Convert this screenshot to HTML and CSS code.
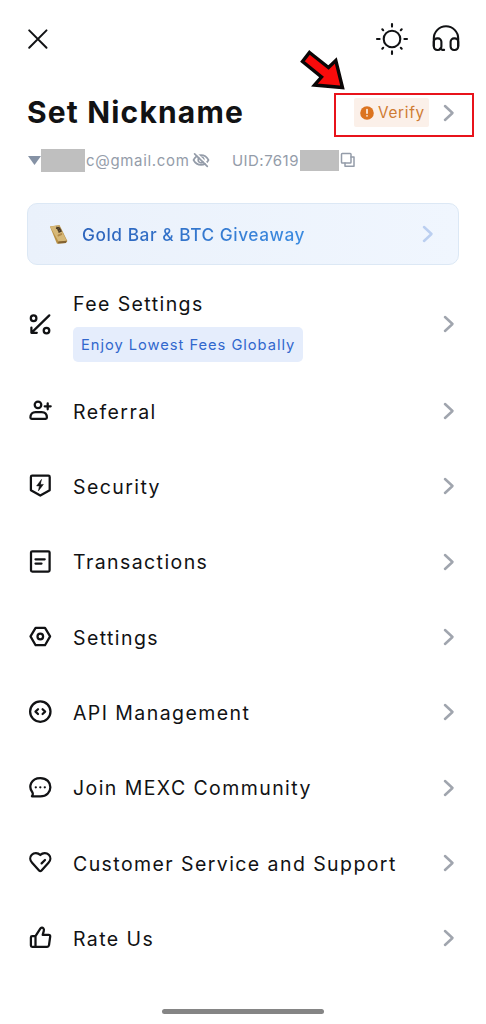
FILE: index.html
```html
<!DOCTYPE html>
<html lang="en">
<head>
<meta charset="utf-8">
<title>Account</title>
<link rel="stylesheet" href="styles.css">
</head>
<body>
<main class="screen">
  <header class="topbar">
    <svg class="close" viewBox="0 0 24 24"><path d="M3.2 3.4 20.5 20.7M20.5 3.4 3.2 20.7"/></svg>
    <div class="tools">
      <svg class="tool" viewBox="0 0 34 34"><circle cx="17" cy="17" r="8.3"/><path d="M17 2v2.6M17 29.4v2.6M2 17h2.6M29.4 17h2.6M7.3 7.3l.9.9M25.8 25.8l.9.9M7.3 26.7l.9-.9M25.8 8.2l.9-.9"/></svg>
      <svg class="tool" viewBox="0 0 34 34"><path d="M4.8 24V16.5a12.2 12.2 0 0 1 24.4 0V24"/><rect x="4.8" y="16.4" width="7.6" height="11.6" rx="3.4"/><rect x="21.6" y="16.4" width="7.6" height="11.6" rx="3.4"/><path d="M11 26.5l2.3 1.4h1.8"/></svg>
    </div>
  </header>

  <section class="profile">
    <h1 class="name">Set Nickname</h1>
    <div class="verify">
      <span class="tag"><svg class="alert" viewBox="0 0 14 14"><circle cx="7" cy="7" r="6.8"/><path d="M7 3.6v3.6M7 9.8v.3"/></svg><span class="tag-text">Verify</span></span>
      <svg class="chev" viewBox="0 0 12 18"><path d="m2 2 7.5 7L2 16"/></svg>
      <svg class="pointer" viewBox="0 0 50 44"><path d="M10.5 3.5 29.5 18.5 36.8 11.5 43.5 38.5 15.5 36 22.5 28 3.5 12.5Z"/></svg>
    </div>
  </section>

  <section class="info">
    <svg class="caret" viewBox="0 0 13 9"><path d="M0 0h13L6.5 9Z"/></svg><span class="mask mask-mail"></span><span class="mail">c@gmail.com</span>
    <svg class="eye" viewBox="0 0 18 16"><path d="M1.5 8C5 1.5 13 1.5 16.5 8 13 14.5 5 14.5 1.5 8Z"/><circle cx="9" cy="8" r="2.8"/><path class="gap" d="M3.8.9 16.3 13"/><path d="M2.6 1.8 15.3 14.3"/></svg>
    <span class="uid">UID:7619</span><span class="mask mask-uid"></span>
    <svg class="copy" viewBox="0 0 16 16"><rect x="1.5" y="1.5" width="9.5" height="9.5" rx=".8"/><path d="M11 5h3v9.3H5V11"/></svg>
  </section>

  <a class="banner">
    <svg class="gold" viewBox="0 0 22 22"><path fill="#b99145" d="M2 2.5 12 1l8.3 16.7-1.6 2.2-9.3.8Z"/><path fill="#d6b878" d="m2 2.5 9.5-1 8.2 16-8.7.8Z"/><path fill="#846332" d="m11 18.3 8.7-.8-1 2.4-8.3.6Z"/><path fill="none" stroke="#4b3b26" stroke-width="1.5" d="m9.4 3.4 2.5 5M9 4.5l2.5-.8 1 1.5-2 1 2.4-.4.8 1.8-2.2.7"/><path stroke="#b28a4a" d="m11 12 3-1.5"/></svg>
    <span class="banner-text">Gold Bar &amp; BTC Giveaway</span>
    <svg class="chev" viewBox="0 0 12 18"><path d="m2 2 7.5 7L2 16"/></svg>
  </a>

  <nav class="menu">
    <a class="row fee">
      <svg class="icon" viewBox="0 0 24 24"><circle cx="5.6" cy="6.2" r="2.8"/><circle cx="18.5" cy="18.6" r="2.8"/><path d="M21.3 3.4 3.6 20.6M3.4 15.5v5.3h5.4"/></svg>
      <span class="fee-copy"><span class="label">Fee Settings</span><span class="promo">Enjoy Lowest Fees Globally</span></span>
      <svg class="chev" viewBox="0 0 12 18"><path d="m2 2 7.5 7L2 16"/></svg>
    </a>
    <a class="row">
      <svg class="icon" viewBox="0 0 24 24"><circle cx="10" cy="5.8" r="3.3"/><path d="M3.7 19.8h14c.8 0 1.2-.4 1.2-1.2 0-3.4-2-5.6-5.2-5.6H7.6c-3.2 0-5.2 2.2-5.2 5.6 0 .8.5 1.2 1.3 1.2ZM16.7 7.3h6M19.7 4.3v6"/></svg>
      <span class="label">Referral</span>
      <svg class="chev" viewBox="0 0 12 18"><path d="m2 2 7.5 7L2 16"/></svg>
    </a>
    <a class="row">
      <svg class="icon" viewBox="0 0 24 24"><path d="M4.2 1.7h16.2c.8 0 1.3.5 1.3 1.3v13.3l-9.4 5.2-9.4-5.2V3c0-.8.5-1.3 1.3-1.3Z"/><path class="solid" d="m13.4 5.6-4.8 6.3h2.8l-1 5 5-6.5h-2.8Z"/></svg>
      <span class="label">Security</span>
      <svg class="chev" viewBox="0 0 12 18"><path d="m2 2 7.5 7L2 16"/></svg>
    </a>
    <a class="row">
      <svg class="icon" viewBox="0 0 24 24"><rect x="3" y="1.3" width="18.6" height="20.2" rx="1.3"/><path d="M7.5 9.3h9.2M7.5 13.6h6"/></svg>
      <span class="label">Transactions</span>
      <svg class="chev" viewBox="0 0 12 18"><path d="m2 2 7.5 7L2 16"/></svg>
    </a>
    <a class="row">
      <svg class="icon" viewBox="0 0 24 24"><path d="M7.6 2.9h9.4l5.1 8.5-5.1 8.8H7.6l-5.1-8.8Z"/><circle cx="12.3" cy="11.5" r="2.8"/></svg>
      <span class="label">Settings</span>
      <svg class="chev" viewBox="0 0 12 18"><path d="m2 2 7.5 7L2 16"/></svg>
    </a>
    <a class="row">
      <svg class="icon" viewBox="0 0 24 24"><circle cx="12.3" cy="11.6" r="10.2"/><path d="m10 9.2-2.5 2.4 2.5 2.4M14.6 9.2l2.5 2.4-2.5 2.4"/></svg>
      <span class="label">API Management</span>
      <svg class="chev" viewBox="0 0 12 18"><path d="m2 2 7.5 7L2 16"/></svg>
    </a>
    <a class="row">
      <svg class="icon" viewBox="0 0 24 24"><path d="M4.6 16.8C-.3 10.5 3.3 2 12.3 2c13.4 0 13.4 18.3 0 18.3H3.9c.9-1 1.2-2 .7-3.5Z"/><path class="dots" d="M7.8 11.3h.01M12.3 11.3h.01M16.8 11.3h.01"/></svg>
      <span class="label">Join MEXC Community</span>
      <svg class="chev" viewBox="0 0 12 18"><path d="m2 2 7.5 7L2 16"/></svg>
    </a>
    <a class="row">
      <svg class="icon" viewBox="0 0 24 24"><path d="M12.3 4C9.8 1.6 6 1.6 3.8 3.8s-2 5.6.3 8l7.2 7.9c.6.6 1.4.6 2 0l7.2-7.9c2.3-2.4 2.5-5.8.3-8s-6-2.2-8.5.2ZM17 9l-3.4 3.4"/></svg>
      <span class="label">Customer Service and Support</span>
      <svg class="chev" viewBox="0 0 12 18"><path d="m2 2 7.5 7L2 16"/></svg>
    </a>
    <a class="row">
      <svg class="icon" viewBox="0 0 24 24"><path d="M7.5 10.2 12.3 2.7c.8-1.3 2.2-1.3 3-.5.7.7.8 1.7.5 2.7l-1.1 4h6.1c.9 0 1.5.7 1.4 1.6L21 19.1c-.2 1-.8 1.7-1.8 1.7H4.2c-.8 0-1.3-.5-1.3-1.3v-8c0-.8.5-1.3 1.3-1.3Zm0 0V20.7"/></svg>
      <span class="label">Rate Us</span>
      <svg class="chev" viewBox="0 0 12 18"><path d="m2 2 7.5 7L2 16"/></svg>
    </a>
  </nav>
  <div class="home"></div>
</main>
</body>
</html>
```
FILE: styles.css
```css
* { box-sizing: border-box; }
body { margin: 0; background: #fff; color: #111214; font-family: Inter, "Liberation Sans", sans-serif; }
.screen { width: 486px; height: 1024px; padding: 22px 27px 0; display: flex; flex-direction: column; overflow: hidden; }
svg { display: block; flex: none; fill: none; stroke: currentColor; stroke-width: 2; stroke-linecap: round; stroke-linejoin: round; }

.topbar { display: flex; height: 34px; align-items: center; justify-content: space-between; padding-right: -4px; }
.close { width: 24px; height: 24px; margin-left: -1px; }
.tools { display: flex; gap: 20px; margin-right: -4px; }
.tool { width: 34px; height: 34px; stroke-width: 2.1; }

.profile { display: flex; height: 45px; margin-top: 36px; margin-right: -15px; align-items: center; justify-content: space-between; }
.name { margin: 0; padding-bottom: 5px; font-size: 30px; line-height: 38px; font-weight: 700; letter-spacing: 1.17px; white-space: nowrap; }
.verify { position: relative; display: flex; align-items: flex-start; width: 140px; height: 44px; border: 2px solid #e8131b; padding: 3px 0 0 18px; }
.tag { display: flex; align-items: center; width: 75px; height: 29px; padding-left: 7px; gap: 4px; background: #fbf0e9; border-radius: 2px; color: #dc7420; }
.tag-text { padding-top: 1px; font-size: 15.3px; line-height: 24px; letter-spacing: .7px; color: #cf7b32; }
.alert { width: 14px; height: 14px; margin: 1px 0 0 -1px; fill: #dc7420; stroke: none; }
.alert path { stroke: #fff; stroke-width: 1.5; }
.chev { width: 12px; height: 18px; color: #a0a5ae; stroke-width: 2.5; }
.verify .chev { margin: 6px 0 0 14px; }
.pointer { position: absolute; left: -37px; top: -46px; width: 50px; height: 44px; fill: #f90b0b; stroke: #0a0606; stroke-width: 3.4; stroke-linejoin: miter; }

.info { display: flex; align-items: center; height: 24px; margin-top: 11px; color: #949ca9; font-size: 15px; line-height: 24px; white-space: nowrap; }
.caret { width: 13px; height: 9px; margin: 1px 0 0 1px; fill: #8592a5; stroke: none; }
.mask { flex: none; height: 23px; background: #bfbfbf; }
.mask-mail { width: 44px; }
.mask-uid { width: 39px; height: 21px; margin-top: 1px; }
.mail { width: 107px; padding: 1px 0 0 1px; letter-spacing: .67px; }
.eye { width: 18px; height: 16px; stroke-width: 1.7; }
.eye .gap { stroke: #fff; }
.uid { width: 90px; padding: 1px 0 0 22px; letter-spacing: .45px; }
.copy { width: 16px; height: 16px; margin-left: 1px; stroke-width: 1.5; }

.banner { display: flex; align-items: center; height: 62px; margin-top: 31px; padding: 0 24px 0 20px; border: 1px solid #dce8f5; border-radius: 10px; background: linear-gradient(90deg, #eaf1fb, #f0f6fe); }
.gold { width: 21px; height: 21px; stroke: none; }
.banner-text { flex: 1; padding: 1px 0 0 13px; font-size: 17.3px; line-height: 26px; font-weight: 500; letter-spacing: .54px; color: transparent; background: linear-gradient(90deg, #2d65bd 10%, #3c8be0 65%); background-clip: text; -webkit-background-clip: text; }
.banner .chev { color: #bbcff0; }

.menu { display: flex; flex-direction: column; margin-top: 10px; }
.row { display: flex; align-items: center; height: 75.33px; padding: 0 4px 0 1px; }
.row.fee { height: 98.5px; }
.icon { width: 24px; height: 24px; stroke-width: 2.25; }
.icon .solid { fill: currentColor; stroke-width: .5; }
.icon .dots { stroke-width: 2.3; }
.label { flex: 1; padding: 1px 0 0 21px; font-size: 19.5px; line-height: 28px; letter-spacing: 1.42px; white-space: nowrap; }
.fee-copy { flex: 1; display: flex; flex-direction: column; align-items: flex-start; padding: 3px 0 0 21px; gap: 9px; }
.fee-copy .label { padding: 0; flex: none; }
.promo { width: 230px; height: 35px; padding: 1px 0 0 8px; border-radius: 5px; background: #e5edfc; color: #3167cd; font-size: 14.7px; line-height: 35px; letter-spacing: .97px; white-space: nowrap; }
.home { width: 162px; height: 5px; margin: 33px auto 0; border-radius: 3px; background: #858585; }
```
